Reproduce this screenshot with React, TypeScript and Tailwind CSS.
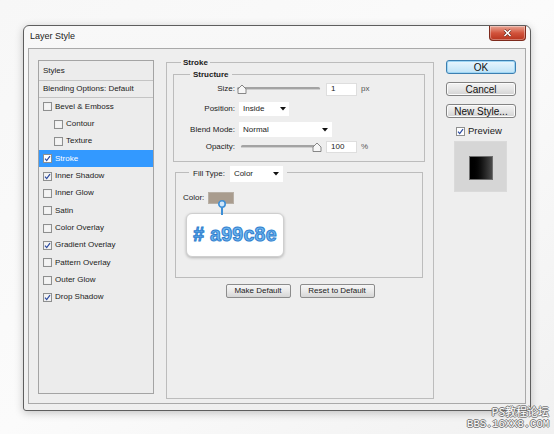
import React from "react";

const styleRows = [
  { label: "Bevel & Emboss", checked: false },
  { label: "Contour", checked: false, indent: true },
  { label: "Texture", checked: false, indent: true },
  { label: "Stroke", checked: true, active: true },
  { label: "Inner Shadow", checked: true },
  { label: "Inner Glow", checked: false },
  { label: "Satin", checked: false },
  { label: "Color Overlay", checked: false },
  { label: "Gradient Overlay", checked: true },
  { label: "Pattern Overlay", checked: false },
  { label: "Outer Glow", checked: false },
  { label: "Drop Shadow", checked: true },
];

function CheckBox({ checked, white }: { checked: boolean; white?: boolean }) {
  return (
    <svg width="9" height="9" viewBox="0 0 9 9" className="shrink-0">
      <rect x="0.5" y="0.5" width="8" height="8" fill={white ? "#ffffff" : "#ededed"} stroke="#8e8f8f" />
      <rect x="1.5" y="1.5" width="6" height="6" fill={white ? "#ffffff" : "#f4f4f4"} />
      {checked && (
        <path d="M2 4.6 L3.7 6.6 L7 2.2" fill="none" stroke="#2a4aa0" strokeWidth="1.2" />
      )}
    </svg>
  );
}

function Arrow() {
  return (
    <svg width="6" height="4" viewBox="0 0 6 4">
      <path d="M0 0 H6 L3 3.5 Z" fill="#111" />
    </svg>
  );
}

function Slider({ thumb, from }: { thumb: "left" | "right"; from: number }) {
  const tx = thumb === "left" ? from + 1 : 78;
  return (
    <svg width="87" height="14" viewBox="0 0 87 14">
      <rect x={from} y="5" width={85 - from} height="3" rx="1.5" fill="#a3a3a3" />
      <rect x={from} y="7" width={85 - from} height="1" fill="#cfcfcf" />
      <path
        d={`M${tx} 11.5 V7 L${tx + 4} 3 L${tx + 8} 7 V11.5 Z`}
        fill="#f7f7f7"
        stroke="#7a7a7a"
        strokeWidth="0.9"
      />
    </svg>
  );
}

function Btn({ children, w }: { children: React.ReactNode; w: string }) {
  return (
    <div
      className={`${w} flex h-[14px] items-center justify-center rounded-[2px] border border-[#8c8c8c] bg-gradient-to-b from-[#f6f6f6] via-[#e9e9e9] to-[#d6d6d6] text-[8px] text-[#1a1a1a]`}
    >
      {children}
    </div>
  );
}

function SideBtn({ children, primary }: { children: React.ReactNode; primary?: boolean }) {
  return (
    <div
      className={
        primary
          ? "flex h-[14px] w-[70px] items-center justify-center rounded-[3px] border border-[#3c7fb1] bg-gradient-to-b from-[#eaf6fd] to-[#bfe3f7] text-[10px] text-[#111] shadow-[inset_0_0_0_1px_#9fd6f4]"
          : "flex h-[14px] w-[70px] items-center justify-center rounded-[3px] border border-[#838383] bg-gradient-to-b from-[#f3f3f3] via-[#e6e6e6] to-[#d2d2d2] text-[10px] text-[#111] shadow-[inset_0_0_0_1px_#fbfbfb]"
      }
    >
      {children}
    </div>
  );
}

export default function App() {
  return (
    <div className="relative h-[434px] w-[554px] overflow-hidden bg-gradient-to-br from-[#f7f7f7] via-[#fbfbfb] to-[#f1f1f1] pl-[23px] pt-[25px] font-['Liberation_Sans',Arial,sans-serif] text-[#1b1b1b]">
      {/* WINDOW */}
      <div className="h-[386px] w-[508px] rounded-t-[6px] rounded-b-[3px] border border-[#5e5e5e] bg-gradient-to-b from-[#f8f8f8] to-[#efefef] shadow-[0_2px_8px_rgba(0,0,0,0.22)]">
        {/* TITLE BAR */}
        <div className="flex h-[22px] items-start justify-between">
          <div className="flex h-[22px] items-center pl-[6px] text-[9px] text-[#222]">Layer Style</div>
          <div className="mr-[4px] flex h-[15px] w-[37px] items-center justify-center rounded-b-[4px] border border-t-0 border-[#7d2a1c] bg-gradient-to-b from-[#e7a595] via-[#d2533c] to-[#b7331d] shadow-[inset_0_0_0_1px_rgba(255,255,255,0.35)]">
            <svg width="9" height="8" viewBox="0 0 9 8">
              <path d="M1.5 1 L7.5 7 M7.5 1 L1.5 7" stroke="#5a1a10" strokeWidth="2.6" />
              <path d="M1.5 1 L7.5 7 M7.5 1 L1.5 7" stroke="#ffffff" strokeWidth="1.6" />
            </svg>
          </div>
        </div>

        {/* CLIENT */}
        <div className="mx-[4px] flex h-[356px] border border-[#a9a9a9] bg-[#eeeeee] pl-[9px] pt-[11px]">
          {/* LEFT: styles list */}
          <div className="flex h-[334px] w-[116px] flex-col border border-[#a4a4a4] bg-[#ececec] text-[8px]">
            <div className="flex h-[20px] items-center border-b border-[#c4c4c4] pl-[4px]">Styles</div>
            <div className="flex h-[17px] items-center border-b border-[#c4c4c4] pl-[4px]">Blending Options: Default</div>
            {styleRows.map((row) => (
              <div
                key={row.label}
                className={`flex h-[17.35px] items-center gap-[3px] ${row.indent ? "pl-[15px]" : "pl-[4px]"} ${
                  row.active ? "bg-[#3399ff] text-white" : ""
                }`}
              >
                <CheckBox checked={row.checked} white={row.active} />
                <span>{row.label}</span>
              </div>
            ))}
          </div>

          {/* MIDDLE: Stroke group */}
          <div className="ml-[12px] mt-[2px] h-[337px] w-[268px] border border-[#bcbcbc] text-[8px]">
            <div className="-mt-[6px] ml-[14px] h-[11px] w-fit bg-[#eeeeee] px-[2px] font-bold leading-[11px]">Stroke</div>

            {/* Structure */}
            <div className="ml-[6px] mt-[6px] h-[88px] w-[252px] border border-[#bcbcbc]">
              <div className="-mt-[6px] ml-[16px] h-[11px] w-fit bg-[#eeeeee] px-[3px] font-bold leading-[11px]">Structure</div>

              <div className="mt-[1px] flex h-[16px] items-center">
                <div className="w-[61px] text-right">Size:</div>
                <Slider thumb="left" from={2} />
                <div className="ml-[4px] flex h-[13px] w-[31px] items-center border border-[#dedede] bg-white pl-[4px]">1</div>
                <div className="ml-[4px] text-[#555]">px</div>
              </div>

              <div className="mt-[5px] flex h-[14px] items-center">
                <div className="w-[61px] text-right">Position:</div>
                <div className="ml-[4px] flex h-[14px] w-[50px] items-center justify-between bg-white pl-[4px] pr-[3px]">
                  <span>Inside</span>
                  <Arrow />
                </div>
              </div>

              <div className="mt-[6px] flex h-[15px] items-center">
                <div className="w-[61px] text-right">Blend Mode:</div>
                <div className="ml-[4px] flex h-[15px] w-[93px] items-center justify-between bg-white pl-[4px] pr-[4px]">
                  <span>Normal</span>
                  <Arrow />
                </div>
              </div>

              <div className="mt-[3px] flex h-[14px] items-center">
                <div className="w-[61px] text-right">Opacity:</div>
                <Slider thumb="right" from={6} />
                <div className="ml-[4px] flex h-[12px] w-[31px] items-center border border-[#dedede] bg-white pl-[4px]">100</div>
                <div className="ml-[4px] text-[#555]">%</div>
              </div>
            </div>

            {/* Fill Type */}
            <div className="ml-[8px] mt-[10px] h-[106px] w-[248px] border border-[#bcbcbc]">
              <div className="-mt-[7px] ml-[13px] flex h-[16px] w-fit items-center bg-[#eeeeee] px-[4px]">
                <span>Fill Type:</span>
                <div className="ml-[5px] flex h-[16px] w-[53px] items-center justify-between bg-white pl-[4px] pr-[4px]">
                  <span>Color</span>
                  <Arrow />
                </div>
              </div>

              <div className="ml-[7px] mt-[10px] flex h-[12px] items-center gap-[4px]">
                <span>Color:</span>
                <div className="h-[12px] w-[26px] border border-[#b8b0a6] bg-[#a99c8e]" />
              </div>

              <div className="relative ml-[10px] mt-[9px] flex h-[44px] w-[98px] items-center justify-center rounded-[6px] border border-[#cfcfcf] bg-white shadow-[0_1px_3px_rgba(0,0,0,0.25)]">
                <svg width="10" height="16" viewBox="0 0 10 16" className="absolute -top-[15px] left-[30px]">
                  <line x1="5" y1="8" x2="5" y2="16" stroke="#3d8fd6" strokeWidth="2" />
                  <circle cx="5" cy="5" r="3.2" fill="#cfe6fa" stroke="#3d8fd6" strokeWidth="1.6" />
                </svg>
                <span className="text-[19.5px] font-bold tracking-[0.3px] text-[#6fb6ee] [-webkit-text-stroke:1px_#2f7fcf] [text-shadow:0_0_2px_#d8ecfb]">
                  # a99c8e
                </span>
              </div>
            </div>

            <div className="mt-[6px] flex justify-center gap-[9px]">
              <Btn w="w-[65px]">Make Default</Btn>
              <Btn w="w-[75px]">Reset to Default</Btn>
            </div>
          </div>

          {/* RIGHT: buttons + preview */}
          <div className="ml-[12px] flex w-[70px] flex-col">
            <SideBtn primary>OK</SideBtn>
            <div className="mt-[8px]">
              <SideBtn>Cancel</SideBtn>
            </div>
            <div className="mt-[8px]">
              <SideBtn>New Style...</SideBtn>
            </div>
            <div className="ml-[10px] mt-[8px] flex h-[10px] items-center gap-[3px] text-[9.5px]">
              <CheckBox checked white />
              <span>Preview</span>
            </div>
            <div className="ml-[8px] mt-[5px] flex h-[51px] w-[53px] items-center justify-center border border-[#dadada] bg-[#d6d6d6]">
              <div className="mt-[2px] h-[24px] w-[24px] border border-[#6f6f6f] bg-gradient-to-r from-[#000000] via-[#111111] to-[#4a4a4a]" />
            </div>
          </div>
        </div>
      </div>

      {/* WATERMARK */}
      <div className="absolute bottom-[4px] right-[5px] flex flex-col items-end text-white [text-shadow:1px_0_0_#777,-1px_0_0_#777,0_1px_0_#777,0_-1px_0_#777]">
        <span className="block h-[13px] font-['Noto_Sans_CJK_SC',sans-serif] text-[11px] leading-[13px]">PS教程论坛</span>
        <span className="block h-[12px] font-['Liberation_Mono',monospace] text-[10.5px] leading-[12px]">BBS.16XX8.COM</span>
      </div>
    </div>
  );
}
